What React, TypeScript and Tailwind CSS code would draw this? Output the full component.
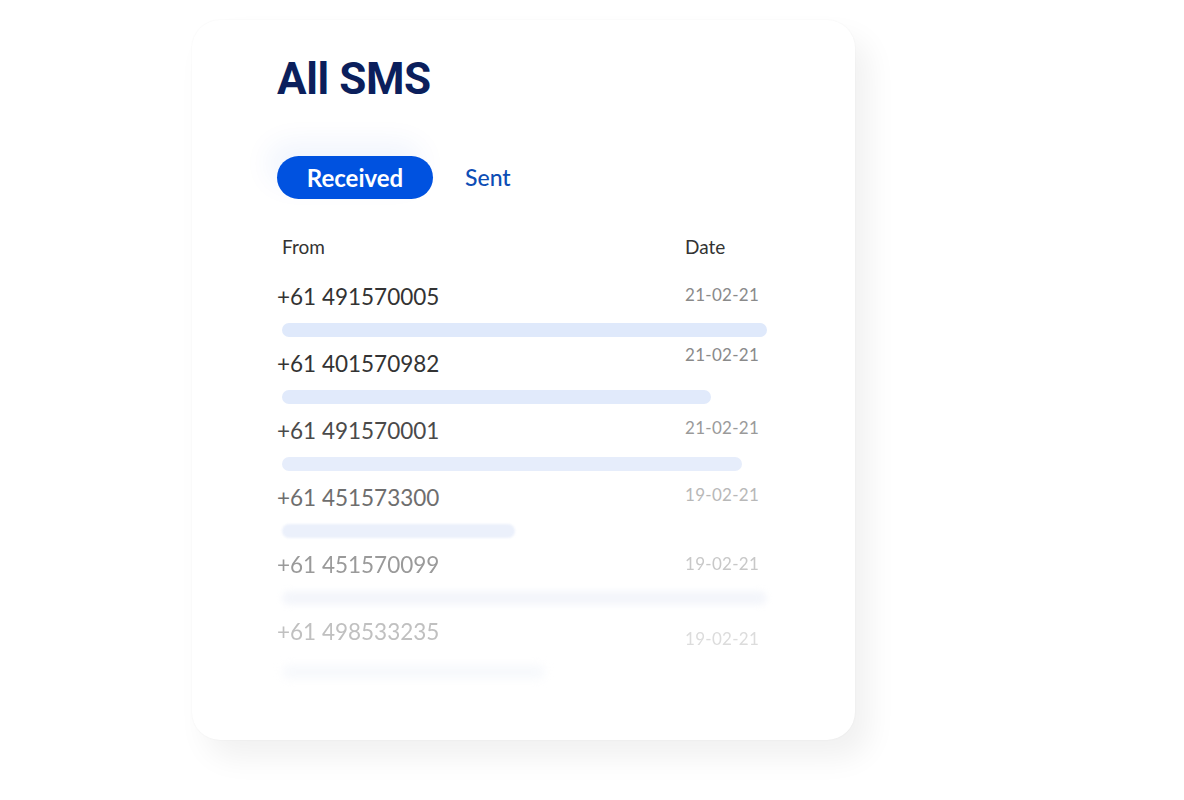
import React from "react";

type Row = {
  phone: string;
  date: string;
  bar: number;
  phoneCls: string;
  dateCls: string;
  barCls: string;
};

const rows: Row[] = [
  { phone: "+61 491570005", date: "21-02-21", bar: 485, phoneCls: "text-[#333333]", dateCls: "text-[#8a8a8a] -mt-[2px]", barCls: "bg-[#dfe9fb]" },
  { phone: "+61 401570982", date: "21-02-21", bar: 429, phoneCls: "text-[#333333]", dateCls: "text-[#8a8a8a] -mt-[9px]", barCls: "bg-[#e1eafb]" },
  { phone: "+61 491570001", date: "21-02-21", bar: 460, phoneCls: "text-[#4a4a4a]", dateCls: "text-[#9a9a9a] -mt-[3px]", barCls: "bg-[#e6edfb]" },
  { phone: "+61 451573300", date: "19-02-21", bar: 233, phoneCls: "text-[#6e6e6e]", dateCls: "text-[#b8b8b8] -mt-[3px]", barCls: "bg-[#ebf0fb] blur-[1px]" },
  { phone: "+61 451570099", date: "19-02-21", bar: 485, phoneCls: "text-[#9a9a9a] blur-[0.3px]", dateCls: "text-[#c8c8c8] -mt-[1px] blur-[0.3px]", barCls: "bg-[#f4f6fb] blur-[3px]" },
  { phone: "+61 498533235", date: "19-02-21", bar: 263, phoneCls: "text-[#c0c0c0] blur-[0.5px]", dateCls: "text-[#dcdcdc] mt-[7px] blur-[0.5px]", barCls: "bg-[#f7f9fc] blur-[4px]" },
];

export default function App() {
  return (
    <div className="min-h-[800px] w-[1184px] bg-white pl-[192px] pt-[20px]">
      <div
        className="h-[720px] w-[663px] rounded-[28px] bg-white pl-[85px] pt-[37px] shadow-[14px_18px_30px_rgba(0,0,0,0.06),0_0_2px_rgba(0,0,0,0.05)]"
        style={{ fontFamily: "Lato, 'Noto Sans', sans-serif" }}
      >
        <h1 className="text-[44px] font-bold leading-none tracking-[-0.4px] text-[#0b1f5c]" style={{ fontFamily: "Roboto, sans-serif" }}>
          All SMS
        </h1>

        <div className="mt-[55px] flex items-center gap-[32px]">
          <div className="flex h-[43px] w-[156px] items-center justify-center rounded-full bg-[#0052e0] text-[24px] font-bold text-white shadow-[-10px_-14px_28px_rgba(0,82,224,0.06)]">
            Received
          </div>
          <div className="text-[23px] font-medium text-[#0d4db5]">Sent</div>
        </div>

        <div className="mt-[35px] grid w-[490px] grid-cols-[408px_82px] text-[19px] leading-[25px] text-[#333333]">
          <div className="pl-[5px]">From</div>
          <div>Date</div>
        </div>

        <div className="mt-[23px] w-[490px]">
          {rows.map((r) => (
            <div key={r.phone} className="mb-[12px]">
              <div className="grid grid-cols-[408px_82px] items-start">
                <div className={`text-[22.5px] leading-[30px] ${r.phoneCls}`}>{r.phone}</div>
                <div className={`text-[17px] leading-[30px] tracking-[0.3px] ${r.dateCls}`}>{r.date}</div>
              </div>
              <div className={`ml-[5px] mt-[11px] h-[14px] rounded-full ${r.barCls}`} style={{ width: r.bar }} />
            </div>
          ))}
        </div>
      </div>
    </div>
  );
}
